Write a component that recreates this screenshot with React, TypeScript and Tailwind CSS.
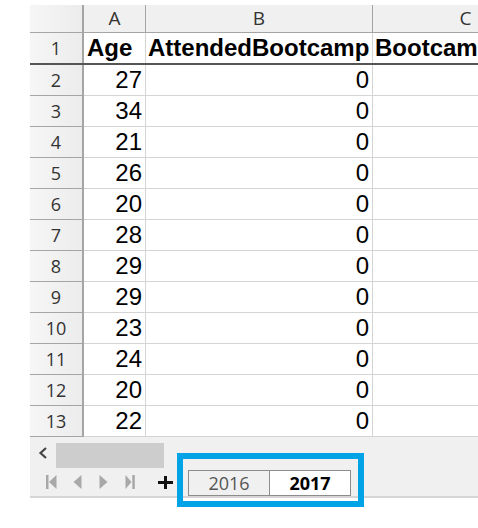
import React from "react";

const ages = [27, 34, 21, 26, 20, 28, 29, 29, 23, 24, 20, 22];

const cellFont = { fontFamily: '"Liberation Sans", Arial, sans-serif' };
const headFont = { fontFamily: '"Open Sans", "Noto Sans", sans-serif' };

function NavIcons() {
  return (
    <div className="flex items-center h-full">
      <svg width="12" height="14" viewBox="0 0 12 14" className="ml-[16px]">
        <rect x="0" y="0" width="2.5" height="14" fill="#a8a8a8" />
        <polygon points="10.5,0 3,7 10.5,14" fill="#a8a8a8" />
      </svg>
      <svg width="9" height="14" viewBox="0 0 9 14" className="ml-[15px]">
        <polygon points="8.5,0 0.5,7 8.5,14" fill="#a8a8a8" />
      </svg>
      <svg width="9" height="14" viewBox="0 0 9 14" className="ml-[17px]">
        <polygon points="0.5,0 8.5,7 0.5,14" fill="#a8a8a8" />
      </svg>
      <svg width="10" height="14" viewBox="0 0 10 14" className="ml-[17px]">
        <polygon points="0.5,0 6.5,7 0.5,14" fill="#a8a8a8" />
        <rect x="7.3" y="0" width="2.5" height="14" fill="#a8a8a8" />
      </svg>
      <svg width="15" height="13" viewBox="0 0 15 13" className="ml-[23px]">
        <rect x="0" y="5" width="15" height="3" fill="#111" />
        <rect x="6" y="0" width="3" height="13" fill="#111" />
      </svg>
    </div>
  );
}

export default function App() {
  return (
    <div className="relative w-[478px] h-[528px] bg-white overflow-hidden">
      <div className="pl-[30px] pt-[5px] w-[600px]">
        {/* column headers */}
        <div className="flex h-[28px] bg-[#f0f0f0] border-b border-[#a5a5a5] text-[19px] text-[#333]" style={headFont}>
          <div className="w-[54px] border-r-2 border-[#a5a5a5] bg-gradient-to-r from-[#f6f6f6] to-[#ececec]" />
          <div className="w-[62px] border-r border-[#a5a5a5] flex items-center justify-center">A</div>
          <div className="w-[227px] border-r border-[#a5a5a5] flex items-center justify-center">B</div>
          <div className="w-[186px] border-r border-[#a5a5a5] flex items-center justify-center">C</div>
        </div>

        {/* row 1 */}
        <div className="flex h-[32px] border-b-2 border-[#555]">
          <div className="w-[54px] border-r-2 border-[#a5a5a5] bg-gradient-to-r from-[#f6f6f6] to-[#ececec] flex items-center justify-center text-[18px] text-[#333]" style={headFont}>1</div>
          <div className="w-[62px] border-r border-[#d4d4d4] flex items-center pl-[3px] text-[24px] font-bold text-black" style={cellFont}>Age</div>
          <div className="w-[227px] border-r border-[#d4d4d4] flex items-center pl-[2px] text-[24px] font-bold text-black whitespace-nowrap" style={cellFont}>AttendedBootcamp</div>
          <div className="w-[186px] flex items-center pl-[2px] text-[24px] font-bold text-black whitespace-nowrap" style={cellFont}>BootcampFinish</div>
        </div>

        {ages.map((age, i) => (
          <div key={i} className="flex h-[31px] border-b border-[#d4d4d4]">
            <div className="w-[54px] border-r-2 border-[#a5a5a5] bg-gradient-to-r from-[#f6f6f6] to-[#ececec] flex items-center justify-center text-[18px] text-[#333] shadow-[0_1px_0_#a5a5a5]" style={headFont}>
              {i + 2}
            </div>
            <div className="w-[62px] border-r border-[#d4d4d4] flex items-center justify-end pr-[3px] text-[24px] text-black" style={cellFont}>{age}</div>
            <div className="w-[227px] border-r border-[#d4d4d4] flex items-center justify-end pr-[3px] text-[24px] text-black" style={cellFont}>0</div>
            <div className="w-[186px]" />
          </div>
        ))}

        {/* bottom bar */}
        <div className="h-[61px] bg-[#f0f0f0] border-b-2 border-[#d6d6d6] flex flex-col">
          <div className="flex h-[31px] items-center">
            <div className="w-[26px] flex items-center justify-center">
              <svg width="10" height="12" viewBox="0 0 10 12">
                <polyline points="8,1 2.5,6 8,11" fill="none" stroke="#444" strokeWidth="2.2" />
              </svg>
            </div>
            <div className="w-[108px] h-[25px] mt-[5px] bg-[#cdcdcd]" />
          </div>
          <div className="flex h-[28px] items-center">
            <NavIcons />
            <div className="ml-[15px] mt-[2px] flex h-[26px] border border-[#8c8c8c] text-[18px]" style={headFont}>
              <div className="w-[81px] bg-[#f0f0f0] border-r border-[#8c8c8c] flex items-center justify-center text-[#555]">2016</div>
              <div className="w-[80px] bg-white flex items-center justify-center font-bold text-black">2017</div>
            </div>
          </div>
        </div>
      </div>

      {/* highlight annotation */}
      <div className="absolute left-[177px] top-[453px] w-[187px] h-[54px] border-[6px] border-[#00a3e6]" />
    </div>
  );
}
